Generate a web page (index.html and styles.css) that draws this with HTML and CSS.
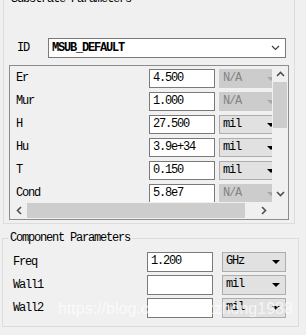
FILE: index.html
```html
<!DOCTYPE html>
<html lang="en">
<head>
  <meta charset="UTF-8">
  <title>Substrate Parameters</title>
  <link rel="stylesheet" href="styles.css">
</head>
<body>
  <fieldset class="group substrate">
    <legend>Substrate Parameters</legend>
    <div class="id-row">
      <span class="label id-label">ID</span>
      <div class="combo id-combo">
        <b>MSUB_DEFAULT</b>
        <svg class="chevron" width="9" height="6" viewBox="0 0 9 6"><polyline points="1,1 4.5,4.5 8,1" fill="none" stroke="#404040" stroke-width="1.2"/></svg>
      </div>
    </div>

    <div class="table">
      <div class="viewport">
        <div class="row"><span class="label">Er</span><span class="input">4.500</span><span class="combo off">N/A<i class="arrow"></i></span></div>
        <div class="row"><span class="label">Mur</span><span class="input">1.000</span><span class="combo off">N/A<i class="arrow"></i></span></div>
        <div class="row"><span class="label">H</span><span class="input">27.500</span><span class="combo on">mil<i class="arrow"></i></span></div>
        <div class="row"><span class="label">Hu</span><span class="input">3.9e+34</span><span class="combo on">mil<i class="arrow"></i></span></div>
        <div class="row"><span class="label">T</span><span class="input">0.150</span><span class="combo on">mil<i class="arrow"></i></span></div>
        <div class="row"><span class="label">Cond</span><span class="input">5.8e7</span><span class="combo off">N/A<i class="arrow"></i></span></div>
      </div>
      <div class="vscroll">
        <div class="sbtn"><svg width="9" height="6" viewBox="0 0 9 6"><polyline points="1,5 4.5,1.5 8,5" fill="none" stroke="#505050" stroke-width="1.6"/></svg></div>
        <div class="vthumb"></div>
        <div class="vtrack"></div>
        <div class="sbtn"><svg width="9" height="6" viewBox="0 0 9 6"><polyline points="1,1 4.5,4.5 8,1" fill="none" stroke="#505050" stroke-width="1.6"/></svg></div>
      </div>
      <div class="hscroll">
        <div class="sbtn"><svg width="6" height="9" viewBox="0 0 6 9"><polyline points="5,1 1.5,4.5 5,8" fill="none" stroke="#505050" stroke-width="1.6"/></svg></div>
        <div class="hthumb"></div>
        <div class="htrack"></div>
        <div class="sbtn"><svg width="6" height="9" viewBox="0 0 6 9"><polyline points="1,1 4.5,4.5 1,8" fill="none" stroke="#505050" stroke-width="1.6"/></svg></div>
      </div>
      <div class="corner"></div>
    </div>
  </fieldset>

  <fieldset class="group component">
    <legend>Component Parameters</legend>
    <div class="prow"><span class="label">Freq</span><span class="input">1.200</span><span class="combo on">GHz<i class="arrow"></i></span></div>
    <div class="prow"><span class="label">Wall1</span><span class="input"></span><span class="combo on">mil<i class="arrow"></i></span></div>
    <div class="prow"><span class="label">Wall2</span><span class="input"></span><span class="combo on">mil<i class="arrow"></i></span></div>
  </fieldset>

  <div class="watermark">https://blog.csdn.net/zzhong1988</div>
</body>
</html>
```

FILE: styles.css
```css
* {
  box-sizing: border-box;
}

body {
  margin: 0;
  width: 306px;
  height: 335px;
  overflow: hidden;
  position: relative;
  background: #f0f0f0;
  font-family: "Liberation Mono", "Noto Sans CJK SC", monospace;
  font-size: 12px;
  letter-spacing: -1.2px;
  color: #000;
}

/* group boxes */
.group {
  border: 1px solid #dcdcdc;
  padding: 0 5px 3px 5px;
}

.group legend {
  padding: 0 2px;
  line-height: 12px;
  height: 12px;
}

.substrate {
  margin: -7px 0 0 3px;
  width: 292px;
}

.component {
  margin: 8px 0 0 2px;
  width: 297px;
  padding-bottom: 7px;
}

/* ID row */
.id-row {
  display: flex;
  align-items: center;
  margin-top: 33px;
  padding-left: 8px;
}

.id-label {
  width: 31px;
}

.id-combo {
  width: 238px;
  height: 20px;
  background: #fff;
  border: 1px solid #7a7a7a;
  padding-left: 3px;
  display: flex;
  align-items: center;
  justify-content: space-between;
}

.id-combo .chevron {
  margin-right: 5px;
}

/* table */
.table {
  margin-top: 7px;
  border: 1px solid #8c8c8c;
  display: grid;
  grid-template-columns: 262px 16px;
  grid-template-rows: 136px 17px;
}

.viewport {
  overflow: hidden;
  padding-left: 6px;
}

.row {
  height: 23px;
  display: flex;
  align-items: flex-start;
  padding-top: 3px;
}

.row .label {
  width: 133px;
  flex-shrink: 0;
  line-height: 19px;
}

.input {
  width: 66px;
  height: 19px;
  flex-shrink: 0;
  background: #fff;
  border: 1px solid #7a7a7a;
  padding-left: 3px;
  line-height: 17px;
}

.combo {
  position: relative;
  flex-shrink: 0;
  line-height: 17px;
}

.row .combo,
.prow .combo {
  width: 63px;
  height: 19px;
  margin-left: 4px;
  padding-left: 3px;
  border: 1px solid;
}

.combo.on {
  background: #e1e1e1;
  border-color: #adadad;
}

.combo.off {
  background: #cccccc;
  border-color: #cccccc;
  color: #838383;
}

.arrow {
  position: absolute;
  right: 6px;
  top: 7px;
  width: 0;
  height: 0;
  border-left: 4px solid transparent;
  border-right: 4px solid transparent;
  border-top: 4px solid #000;
}

.combo.off .arrow {
  border-top-color: #a8a8a8;
}

/* scrollbars */
.vscroll {
  display: flex;
  flex-direction: column;
  background: #f0f0f0;
}

.vscroll .sbtn {
  height: 16px;
  display: flex;
  align-items: center;
  justify-content: center;
}

.vthumb {
  height: 46px;
  margin: 0 1px;
  background: #cdcdcd;
}

.vtrack {
  flex: 1;
}

.hscroll {
  display: flex;
  background: #f0f0f0;
}

.hscroll .sbtn {
  width: 17px;
  display: flex;
  align-items: center;
  justify-content: center;
}

.hthumb {
  width: 218px;
  margin: 1px 0;
  background: #cdcdcd;
}

.htrack {
  flex: 1;
}

.corner {
  background: #f0f0f0;
}

/* component rows */
.prow {
  height: 23px;
  display: flex;
  align-items: center;
  padding-left: 5px;
}

.prow:first-of-type {
  margin-top: 6px;
}

.prow .label {
  width: 134px;
  flex-shrink: 0;
}

.prow .input {
  height: 20px;
}

.prow .combo {
  width: 64px;
  height: 20px;
  margin-left: 9px;
}

.prow .arrow {
  right: 5px;
}

.watermark {
  position: absolute;
  left: 58px;
  top: 300px;
  font-family: "Liberation Sans", sans-serif;
  font-size: 16px;
  letter-spacing: 0;
  color: rgba(255, 255, 255, 0.7);
}
```
